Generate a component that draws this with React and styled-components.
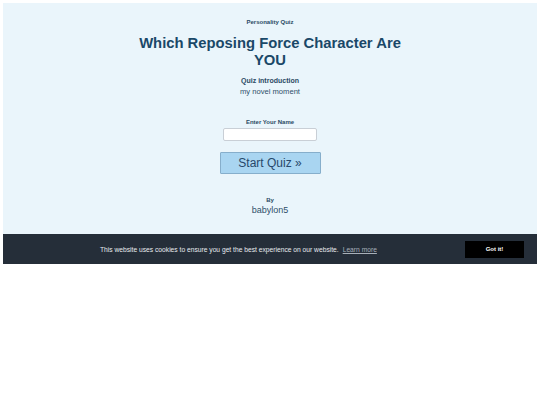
import React from "react";
import styled, { createGlobalStyle } from "styled-components";

const GlobalStyle = createGlobalStyle`
  html, body {
    margin: 0;
    padding: 0;
    background: #ffffff;
  }
  body {
    font-family: "Liberation Sans", Arial, sans-serif;
  }
`;

const Page = styled.div`
  padding: 3px;
`;

const QuizPanel = styled.section`
  background: #eaf5fb;
  display: flex;
  flex-direction: column;
  align-items: center;
  padding: 16px 20px 18px;
  height: 197px;
  color: #1c4566;
`;

const Kicker = styled.div`
  font-size: 6px;
  font-weight: bold;
  color: #2b4a63;
  margin-bottom: 10px;
`;

const Title = styled.h1`
  margin: 0;
  font-size: 14.8px;
  line-height: 16.5px;
  font-weight: bold;
  text-align: center;
  color: #1a4868;
  width: 290px;
`;

const Label = styled.div`
  font-size: ${(p) => p.$size || 7}px;
  font-weight: bold;
  color: #2b4a63;
  margin-top: ${(p) => p.$top || 0}px;
`;

const Plain = styled.div`
  font-size: ${(p) => p.$size || 7.6}px;
  color: #2f4f69;
  margin-top: ${(p) => p.$top || 0}px;
`;

const NameInput = styled.input`
  box-sizing: border-box;
  width: 94px;
  height: 13px;
  margin-top: 3px;
  border: 1px solid #c9cfd6;
  border-radius: 2px;
  background: #ffffff;
  padding: 0 3px;
  font-size: 7px;
`;

const StartButton = styled.button`
  box-sizing: border-box;
  width: 101px;
  height: 22px;
  margin-top: 11px;
  background: #a9d5f1;
  border: 1px solid #86aecb;
  border-radius: 1px;
  color: #27486a;
  font-family: "Liberation Sans", Arial, sans-serif;
  font-size: 12px;
  padding: 0;
  cursor: pointer;
`;

const CookieBar = styled.div`
  height: 30px;
  background: #252e39;
  display: flex;
  align-items: center;
  padding: 0 13px 0 97px;
  font-size: 6.7px;
  color: #e8ebef;
`;

const CookieText = styled.span`
  flex: 1;
`;

const LearnMore = styled.a`
  color: #a8b0b9;
  text-decoration: underline;
  margin-left: 4px;
`;

const GotIt = styled.button`
  width: 59px;
  height: 17px;
  background: #000000;
  border: none;
  color: #ffffff;
  font-family: "Liberation Sans", Arial, sans-serif;
  font-size: 6px;
  font-weight: bold;
  padding: 0;
`;

export default function App() {
  return (
    <Page>
      <GlobalStyle />
      <QuizPanel>
        <Kicker>Personality Quiz</Kicker>
        <Title>Which Reposing Force Character Are YOU</Title>
        <Label $top={9}>Quiz introduction</Label>
        <Plain $top={3}>my novel moment</Plain>
        <Label $size={6} $top={23}>Enter Your Name</Label>
        <NameInput type="text" />
        <StartButton>Start Quiz »</StartButton>
        <Label $size={6} $top={23}>By</Label>
        <Plain $size={9} $top={2}>babylon5</Plain>
      </QuizPanel>
      <CookieBar>
        <CookieText>
          This website uses cookies to ensure you get the best experience on our website.
          <LearnMore href="#">Learn more</LearnMore>
        </CookieText>
        <GotIt>Got it!</GotIt>
      </CookieBar>
    </Page>
  );
}
